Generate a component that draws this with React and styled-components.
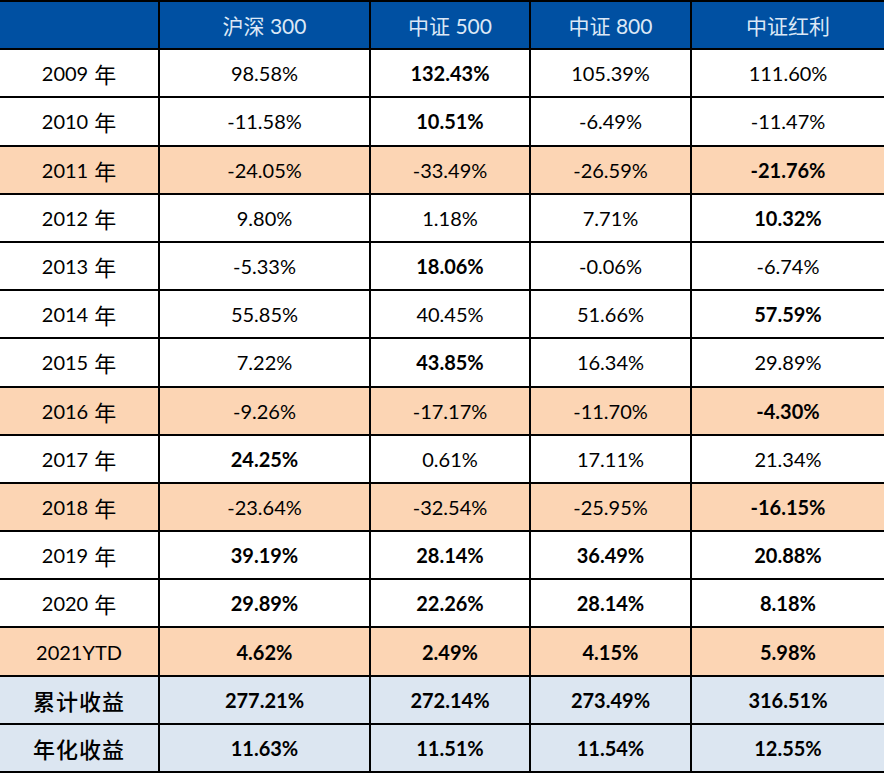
import React from 'react';
import styled, { createGlobalStyle } from 'styled-components';

const GlobalStyle = createGlobalStyle`
  html, body {
    margin: 0;
    padding: 0;
    background: #ffffff;
  }
  body {
    font-family: Lato, "Noto Sans CJK SC", sans-serif;
  }
`;

const columns = ['沪深 300', '中证 500', '中证 800', '中证红利'];

// b marks the bold figures, tone the row colour
const rows = [
  { label: '2009 年', values: ['98.58%', '132.43%', '105.39%', '111.60%'], b: [1] },
  { label: '2010 年', values: ['-11.58%', '10.51%', '-6.49%', '-11.47%'], b: [1] },
  { label: '2011 年', values: ['-24.05%', '-33.49%', '-26.59%', '-21.76%'], b: [3], tone: 'down' },
  { label: '2012 年', values: ['9.80%', '1.18%', '7.71%', '10.32%'], b: [3] },
  { label: '2013 年', values: ['-5.33%', '18.06%', '-0.06%', '-6.74%'], b: [1] },
  { label: '2014 年', values: ['55.85%', '40.45%', '51.66%', '57.59%'], b: [3] },
  { label: '2015 年', values: ['7.22%', '43.85%', '16.34%', '29.89%'], b: [1] },
  { label: '2016 年', values: ['-9.26%', '-17.17%', '-11.70%', '-4.30%'], b: [3], tone: 'down' },
  { label: '2017 年', values: ['24.25%', '0.61%', '17.11%', '21.34%'], b: [0] },
  { label: '2018 年', values: ['-23.64%', '-32.54%', '-25.95%', '-16.15%'], b: [3], tone: 'down' },
  { label: '2019 年', values: ['39.19%', '28.14%', '36.49%', '20.88%'], b: [0, 1, 2, 3] },
  { label: '2020 年', values: ['29.89%', '22.26%', '28.14%', '8.18%'], b: [0, 1, 2, 3] },
  { label: '2021YTD', values: ['4.62%', '2.49%', '4.15%', '5.98%'], b: [0, 1, 2, 3], tone: 'down' },
  { label: '累计收益', values: ['277.21%', '272.14%', '273.49%', '316.51%'], b: [0, 1, 2, 3], tone: 'sum' },
  { label: '年化收益', values: ['11.63%', '11.51%', '11.54%', '12.55%'], b: [0, 1, 2, 3], tone: 'sum' },
];

const toneColors = {
  down: '#fcd5b4',
  sum: '#dce6f1',
};

const App = () => (
  <>
    <GlobalStyle />
    <Table>
      <HeadCell />
      {columns.map((c) => (
        <HeadCell key={c}>{c}</HeadCell>
      ))}
      {rows.map((row) => (
        <React.Fragment key={row.label}>
          <LabelCell $tone={row.tone}>
            {row.label.endsWith('年') ? (
              <>
                {row.label.slice(0, -1)}
                <Cjk>年</Cjk>
              </>
            ) : row.tone === 'sum' ? (
              <Cjk $strong>{row.label}</Cjk>
            ) : (
              row.label
            )}
          </LabelCell>
          {row.values.map((v, i) => (
            <Cell key={i} $tone={row.tone} $bold={row.b.includes(i)}>
              {v}
            </Cell>
          ))}
        </React.Fragment>
      ))}
    </Table>
  </>
);

const Table = styled.div`
  display: grid;
  grid-template-columns: 158px 209px 158px 159px 192px;
  grid-auto-rows: 46.2px;
  gap: 2px;
  width: 884px;
  background: #000000;
  padding: 2px 0;
  box-sizing: border-box;
`;

const Cell = styled.div`
  display: flex;
  align-items: center;
  justify-content: center;
  background: ${(p) => toneColors[p.$tone] || '#ffffff'};
  color: #000000;
  font-size: 20px;
  font-weight: ${(p) => (p.$bold ? 700 : 400)};
  white-space: nowrap;
`;

const LabelCell = styled(Cell)`
  font-weight: 400;
`;

const HeadCell = styled.div`
  display: flex;
  align-items: center;
  justify-content: center;
  background: #0050a2;
  color: #dce8f6;
  font-size: 21px;
  font-family: Lato, "Noto Sans CJK SC", sans-serif;
  white-space: nowrap;
`;

const Cjk = styled.span`
  font-family: "Noto Sans CJK SC", sans-serif;
  font-size: 22px;
  font-weight: ${(p) => (p.$strong ? 500 : 400)};
  margin-left: ${(p) => (p.$strong ? 0 : '6px')};
  letter-spacing: ${(p) => (p.$strong ? '1px' : 0)};
`;

export default App;
